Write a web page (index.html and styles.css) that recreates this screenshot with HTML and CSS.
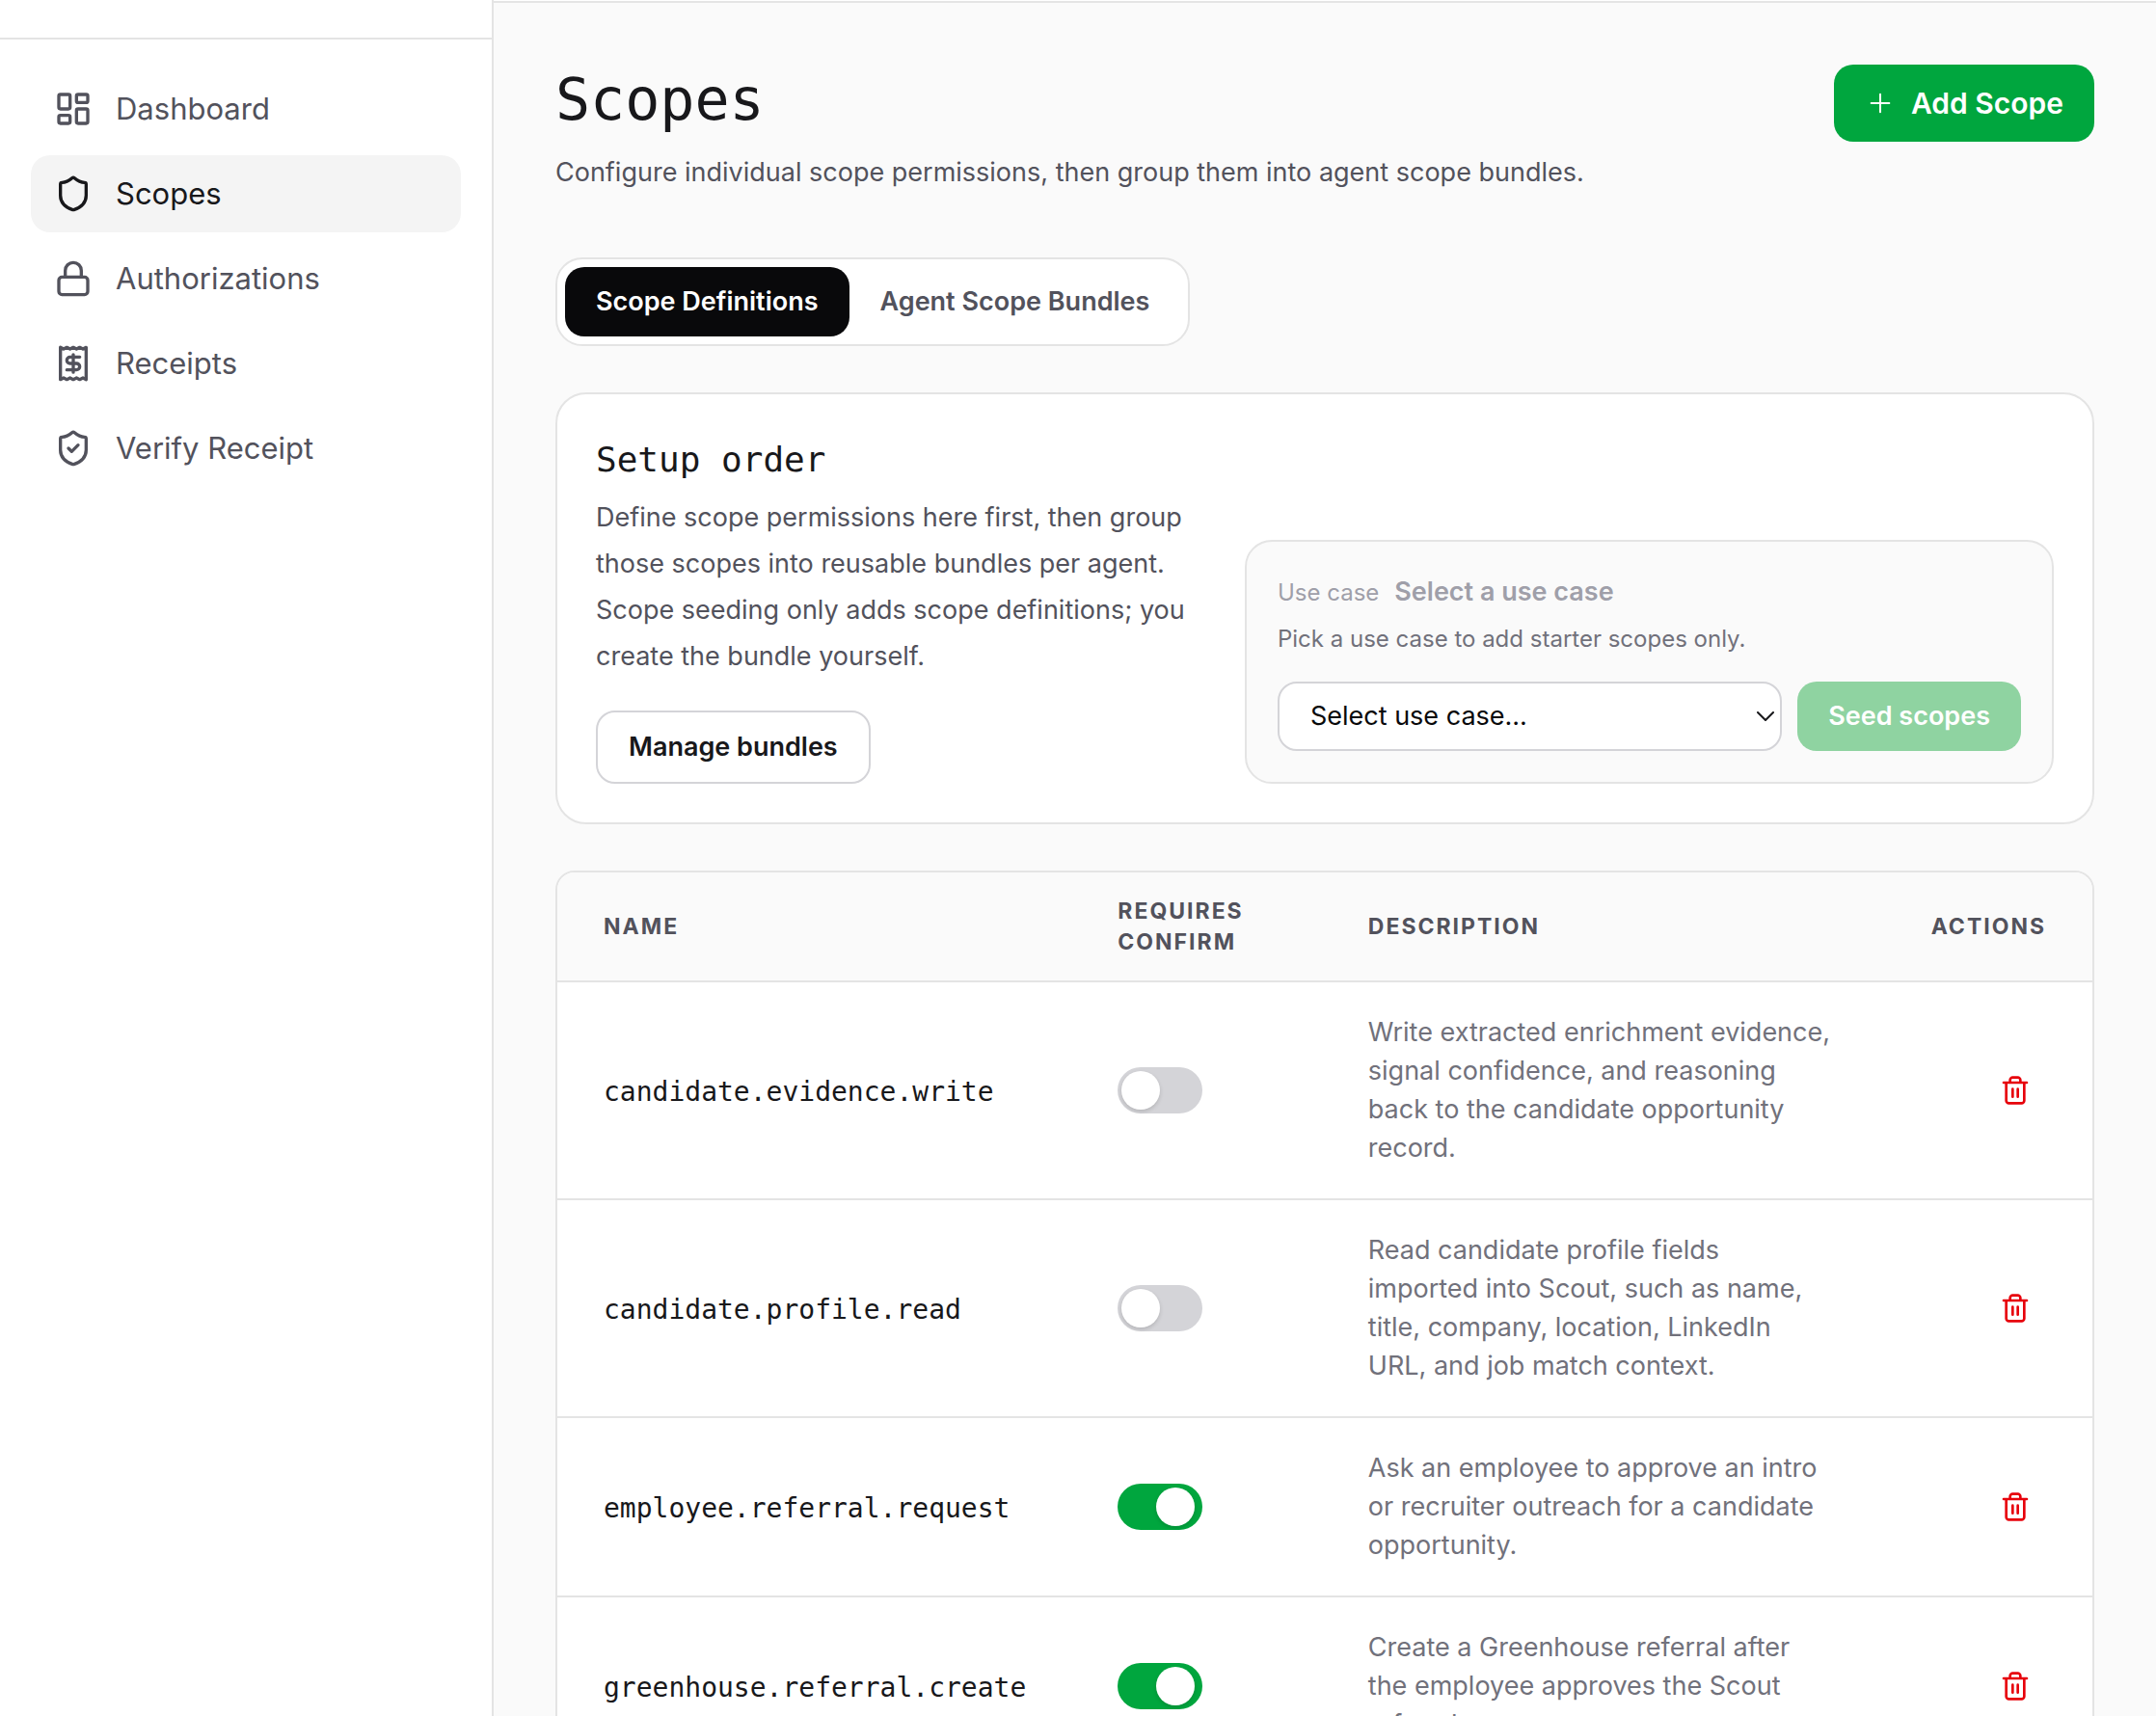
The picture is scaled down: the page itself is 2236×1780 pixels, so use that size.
FILE: index.html
```html
<!DOCTYPE html>
<html lang="en">
<head>
<meta charset="utf-8">
<title>Scopes</title>
<meta name="viewport" content="width=device-width, initial-scale=1">
<link rel="stylesheet" href="styles.css">
</head>
<body>
<svg class="sprite" aria-hidden="true">
  <symbol id="trash" viewBox="0 0 24 24">
    <path d="M3 6h18M19 6v14c0 1-1 2-2 2H7c-1 0-2-1-2-2V6M8 6V4c0-1 1-2 2-2h4c1 0 2 1 2 2v2M10 11v6M14 11v6"/>
  </symbol>
</svg>
<div class="app">
  <aside class="sidebar">
    <div class="brand"></div>
    <nav class="nav" aria-label="Main">
      <a class="nav-item" href="#dashboard">
        <svg class="icon" viewBox="0 0 24 24"><rect x="3" y="3" width="7" height="9" rx="1"/><rect x="14" y="3" width="7" height="5" rx="1"/><rect x="14" y="12" width="7" height="9" rx="1"/><rect x="3" y="16" width="7" height="5" rx="1"/></svg>
        Dashboard
      </a>
      <a class="nav-item active" href="#scopes" aria-current="page">
        <svg class="icon" viewBox="0 0 24 24"><path d="M20 13c0 5-3.500 7.500-7.660 8.950a1 1 0 0 1-.67-.01C7.500 20.500 4 18 4 13V6a1 1 0 0 1 1-1c2 0 4.500-1.200 6.240-2.720a1.170 1.170 0 0 1 1.520 0C14.510 3.810 17 5 19 5a1 1 0 0 1 1 1z"/></svg>
        Scopes
      </a>
      <a class="nav-item" href="#authorizations">
        <svg class="icon" viewBox="0 0 24 24"><rect x="3" y="11" width="18" height="11" rx="2"/><path d="M7 11V7a5 5 0 0 1 10 0v4"/></svg>
        Authorizations
      </a>
      <a class="nav-item" href="#receipts">
        <svg class="icon" viewBox="0 0 24 24"><path d="M4 2v20l2-1 2 1 2-1 2 1 2-1 2 1 2-1 2 1V2l-2 1-2-1-2 1-2-1-2 1-2-1-2 1Z"/><path d="M16 8h-6a2 2 0 1 0 0 4h4a2 2 0 1 1 0 4H8M12 17.500v-11"/></svg>
        Receipts
      </a>
      <a class="nav-item" href="#verify">
        <svg class="icon" viewBox="0 0 24 24"><path d="M20 13c0 5-3.500 7.500-7.660 8.950a1 1 0 0 1-.67-.01C7.500 20.500 4 18 4 13V6a1 1 0 0 1 1-1c2 0 4.500-1.200 6.240-2.720a1.170 1.170 0 0 1 1.520 0C14.510 3.810 17 5 19 5a1 1 0 0 1 1 1z"/><path d="m9 12 2 2 4-4"/></svg>
        Verify Receipt
      </a>
    </nav>
  </aside>

  <div class="page">
    <div class="topbar"></div>
    <main class="content">
      <header class="page-header">
        <div>
          <h1 class="title">Scopes</h1>
          <p class="subtitle">Configure individual scope permissions, then group them into agent scope bundles.</p>
        </div>
        <button class="btn btn-add" type="button">
          <svg class="icon-plus" viewBox="0 0 24 24"><path d="M5 12h14M12 5v14"/></svg>
          Add Scope
        </button>
      </header>

      <div class="tabs" role="tablist">
        <button class="tab selected" type="button" role="tab" aria-selected="true">Scope Definitions</button>
        <button class="tab" type="button" role="tab" aria-selected="false">Agent Scope Bundles</button>
      </div>

      <section class="setup">
        <div>
          <h2 class="setup-title">Setup order</h2>
          <p class="setup-text">Define scope permissions here first, then group those scopes into reusable bundles per agent. Scope seeding only adds scope definitions; you create the bundle yourself.</p>
          <button class="btn btn-outline" type="button">Manage bundles</button>
        </div>
        <div class="seed">
          <div class="seed-head">
            <label class="seed-label" for="use-case">Use case</label>
            <span class="seed-value">Select a use case</span>
          </div>
          <p class="seed-hint">Pick a use case to add starter scopes only.</p>
          <div class="seed-row">
            <div class="select-wrap">
              <select class="select" id="use-case"><option>Select use case...</option></select>
              <svg class="chevron" viewBox="0 0 18 10"><path d="m1 1 8 8 8-8"/></svg>
            </div>
            <button class="btn btn-seed" type="button" disabled>Seed scopes</button>
          </div>
        </div>
      </section>

      <div class="table-card">
        <table class="table">
          <colgroup><col class="col-name"><col class="col-confirm"><col class="col-desc"><col class="col-actions"></colgroup>
          <thead>
            <tr><th scope="col">Name</th><th scope="col">Requires Confirm</th><th scope="col">Description</th><th scope="col" class="right">Actions</th></tr>
          </thead>
          <tbody>
            <tr>
              <td class="name">candidate.evidence.write</td>
              <td><input class="toggle" type="checkbox" role="switch" aria-label="Require confirmation for candidate.evidence.write"></td>
              <td class="desc">Write extracted enrichment evidence, signal confidence, and reasoning back to the candidate opportunity record.</td>
              <td class="right"><button class="btn-icon" type="button" aria-label="Delete candidate.evidence.write"><svg class="icon-trash"><use href="#trash"/></svg></button></td>
            </tr>
            <tr>
              <td class="name">candidate.profile.read</td>
              <td><input class="toggle" type="checkbox" role="switch" aria-label="Require confirmation for candidate.profile.read"></td>
              <td class="desc">Read candidate profile fields imported into Scout, such as name, title, company, location, LinkedIn URL, and job match context.</td>
              <td class="right"><button class="btn-icon" type="button" aria-label="Delete candidate.profile.read"><svg class="icon-trash"><use href="#trash"/></svg></button></td>
            </tr>
            <tr>
              <td class="name">employee.referral.request</td>
              <td><input class="toggle" type="checkbox" role="switch" checked aria-label="Require confirmation for employee.referral.request"></td>
              <td class="desc">Ask an employee to approve an intro or recruiter outreach for a candidate opportunity.</td>
              <td class="right"><button class="btn-icon" type="button" aria-label="Delete employee.referral.request"><svg class="icon-trash"><use href="#trash"/></svg></button></td>
            </tr>
            <tr>
              <td class="name">greenhouse.referral.create</td>
              <td><input class="toggle" type="checkbox" role="switch" checked aria-label="Require confirmation for greenhouse.referral.create"></td>
              <td class="desc">Create a Greenhouse referral after the employee approves the Scout referral.</td>
              <td class="right"><button class="btn-icon" type="button" aria-label="Delete greenhouse.referral.create"><svg class="icon-trash"><use href="#trash"/></svg></button></td>
            </tr>
          </tbody>
        </table>
      </div>
    </main>
  </div>
</div>
</body>
</html>
```
FILE: styles.css
```css
:root {
  --line: #e4e4e4;
  --line-strong: #d4d4d8;
  --ink: #18181b;
  --body: #52525c;
  --muted: #71717b;
  --green: #00a63e;
  --surface: #fafafa;
  --sans: Inter, "Liberation Sans", sans-serif;
  --mono: "DejaVu Sans Mono", monospace;
}

* { box-sizing: border-box; }

html, body { height: 100%; }

body {
  margin: 0;
  overflow: hidden;
  background: var(--surface);
  color: var(--ink);
  font-family: var(--sans);
  font-size: 27px;
  line-height: 40px;
}

h1, h2, p { margin: 0; font-weight: 400; }

button, select { font: inherit; }

svg {
  fill: none;
  stroke: currentColor;
  stroke-width: 2;
  stroke-linecap: round;
  stroke-linejoin: round;
}

.sprite { position: absolute; width: 0; height: 0; }

.app { display: flex; height: 100%; }

/* Sidebar */
.sidebar {
  flex: none;
  width: 512px;
  background: #fff;
  border-right: 2px solid var(--line);
}

.brand { height: 41px; border-bottom: 2px solid var(--line); }

.nav {
  display: flex;
  flex-direction: column;
  gap: 8px;
  padding: 32px;
}

.nav-item {
  display: flex;
  align-items: center;
  gap: 24px;
  height: 80px;
  padding: 0 24px;
  border-radius: 20px;
  color: var(--body);
  font-size: 31px;
  text-decoration: none;
}

.nav-item.active { background: #f4f4f4; color: var(--ink); }

.icon { width: 40px; height: 40px; }

/* Page */
.page { flex: 1; min-width: 0; overflow: hidden; }

.topbar { height: 3px; background: #fff; border-bottom: 2px solid var(--line); }

.content { padding: 64px; }

.page-header {
  display: flex;
  justify-content: space-between;
  align-items: flex-start;
  margin-bottom: 68px;
}

.title {
  margin-bottom: 20px;
  font-family: var(--mono);
  font-size: 60px;
  line-height: 72px;
}

.subtitle { color: var(--body); }

.btn {
  border: 0;
  border-radius: 20px;
  padding: 0 32px;
  font-weight: 600;
  white-space: nowrap;
}

.btn-add {
  display: flex;
  align-items: center;
  gap: 16px;
  height: 80px;
  background: var(--green);
  color: #fff;
  font-size: 30px;
}

.icon-plus { width: 32px; height: 32px; stroke-width: 1.5; }

.tabs {
  display: flex;
  width: fit-content;
  padding: 8px;
  margin-bottom: 48px;
  background: #fff;
  border: 2px solid var(--line);
  border-radius: 28px;
}

.tab {
  height: 72px;
  padding: 0 32px;
  border: 0;
  border-radius: 20px;
  background: transparent;
  color: var(--body);
  font-weight: 600;
}

.tab.selected { background: #09090b; color: #fff; }

/* Setup card */
.setup {
  display: grid;
  grid-template-columns: 43fr 57fr;
  align-items: end;
  gap: 40px;
  padding: 40px;
  margin-bottom: 48px;
  background: #fff;
  border: 2px solid var(--line);
  border-radius: 32px;
}

.setup-title {
  margin-bottom: 8px;
  font-family: var(--mono);
  font-size: 36px;
  line-height: 56px;
}

.setup-text {
  margin-bottom: 32px;
  color: var(--body);
  line-height: 48px;
}

.btn-outline {
  display: block;
  height: 76px;
  background: #fff;
  border: 2px solid var(--line-strong);
  color: var(--ink);
}

.seed {
  padding: 32px;
  background: var(--surface);
  border: 2px solid var(--line);
  border-radius: 28px;
}

.seed-head {
  display: flex;
  align-items: baseline;
  gap: 16px;
  color: #9f9fa9;
}

.seed-label { font-size: 24px; }

.seed-value { font-weight: 600; }

.seed-hint {
  margin: 12px 0 28px;
  color: var(--muted);
  font-size: 24px;
  line-height: 32px;
}

.seed-row { display: flex; gap: 16px; }

.select-wrap { position: relative; flex: 1; }

.select {
  display: block;
  width: 100%;
  height: 72px;
  padding: 0 32px;
  border: 2px solid var(--line-strong);
  border-radius: 20px;
  background: #fff;
  color: #09090b;
  appearance: none;
}

.chevron {
  position: absolute;
  right: 8px;
  top: 31px;
  width: 18px;
  height: 10px;
  color: var(--ink);
  pointer-events: none;
}

.btn-seed { background: #8fd3a1; color: #fff; }

/* Table */
.table-card {
  overflow: hidden;
  background: #fff;
  border: 2px solid var(--line);
  border-radius: 20px;
}

.table {
  width: 100%;
  table-layout: fixed;
  border-collapse: separate;
  border-spacing: 0;
}

.col-name { width: 33.5%; }
.col-confirm { width: 16.3%; }
.col-desc { width: 36.3%; }
.col-actions { width: 13.9%; }

.table th {
  padding: 24px 48px;
  background: var(--surface);
  border-bottom: 2px solid var(--line);
  color: var(--body);
  font-size: 23px;
  font-weight: 700;
  line-height: 32px;
  letter-spacing: 2px;
  text-align: left;
  text-transform: uppercase;
}

.table td {
  padding: 32px 48px;
  border-bottom: 2px solid var(--line);
}

.table .right { text-align: right; }

.table .name {
  padding-top: 36px;
  font-family: var(--mono);
  font-size: 28px;
  white-space: nowrap;
}

.table .desc { color: var(--muted); }

.toggle {
  display: block;
  width: 88px;
  height: 48px;
  margin: 0;
  padding: 4px;
  appearance: none;
  border-radius: 24px;
  background: var(--line-strong);
}

.toggle::before {
  content: "";
  display: block;
  width: 40px;
  height: 40px;
  border-radius: 50%;
  background: #fff;
  box-shadow: 0 2px 4px rgb(0 0 0 / 15%);
}

.toggle:checked { background: var(--green); }

.toggle:checked::before { margin-left: 36px; }

.btn-icon {
  display: inline-flex;
  padding: 16px;
  border: 0;
  background: none;
  color: #e7000b;
  vertical-align: middle;
}

.icon-trash { width: 32px; height: 32px; }
```
